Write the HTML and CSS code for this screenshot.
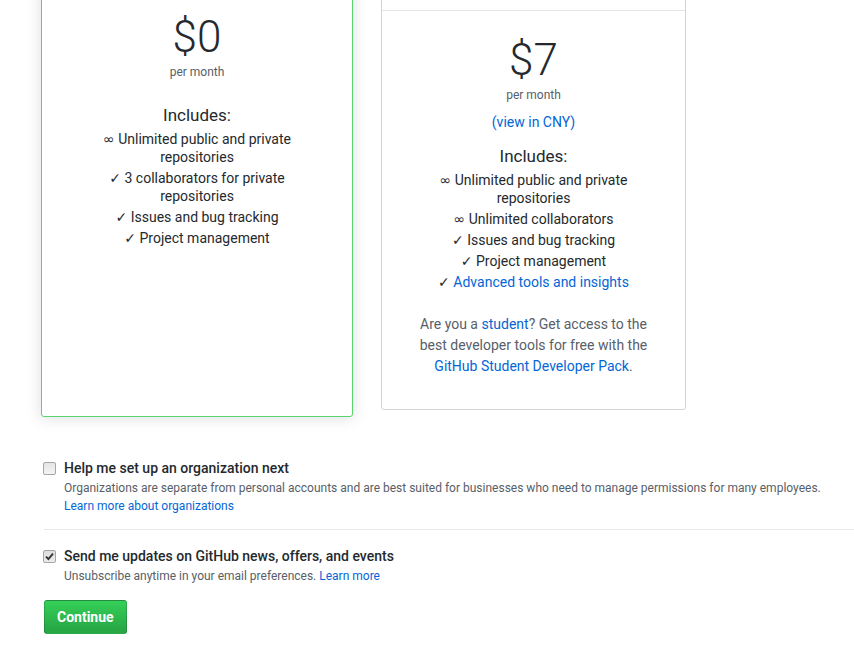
FILE: index.html
```html
<!DOCTYPE html>
<html lang="en">
<head>
<meta charset="utf-8">
<title>Choose your plan</title>
<link rel="stylesheet" href="styles.css">
</head>
<body>
<div class="page">
  <div class="plans">
    <div class="plan plan-selected">
      <div class="plan-body plan-body-free">
        <div class="price">$0</div>
        <div class="per-month">per month</div>
        <div class="includes includes-free">Includes:</div>
        <ul class="features">
          <li><span class="sym">∞</span> Unlimited public and private repositories</li>
          <li><span class="sym">✓</span> 3 collaborators for private repositories</li>
          <li><span class="sym">✓</span> Issues and bug tracking</li>
          <li><span class="sym">✓</span> Project management</li>
        </ul>
      </div>
    </div>
    <div class="plan">
      <div class="plan-header"></div>
      <div class="plan-body plan-body-dev">
        <div class="price">$7</div>
        <div class="per-month">per month</div>
        <a class="currency" href="#">(view in CNY)</a>
        <div class="includes">Includes:</div>
        <ul class="features">
          <li><span class="sym">∞</span> Unlimited public and private repositories</li>
          <li><span class="sym">∞</span> Unlimited collaborators</li>
          <li><span class="sym">✓</span> Issues and bug tracking</li>
          <li><span class="sym">✓</span> Project management</li>
          <li><span class="sym">✓</span> <a href="#">Advanced tools and insights</a></li>
        </ul>
        <p class="student">Are you a <a href="#">student</a>? Get access to the best developer tools for free with the <a href="#">GitHub Student Developer Pack</a>.</p>
      </div>
    </div>
  </div>

  <form class="options">
    <label class="option">
      <input type="checkbox" class="cb-input">
      <span class="cb-box"></span>
      <span class="option-text">
        <span class="option-title">Help me set up an organization next</span>
        <span class="note">Organizations are separate from personal accounts and are best suited for businesses who need to manage permissions for many employees.</span>
        <a class="note-link" href="#">Learn more about organizations</a>
      </span>
    </label>
    <hr class="divider">
    <label class="option option-second">
      <input type="checkbox" class="cb-input" checked>
      <span class="cb-box cb-checked"><svg width="9" height="9" viewBox="0 0 9 9"><path d="M1 4.6 L3.4 7 L8 1.6" fill="none" stroke="#333" stroke-width="1.9"/></svg></span>
      <span class="option-text">
        <span class="option-title">Send me updates on GitHub news, offers, and events</span>
        <span class="note">Unsubscribe anytime in your email preferences. <a href="#">Learn more</a></span>
      </span>
    </label>
    <button type="button" class="btn-primary">Continue</button>
  </form>
</div>
</body>
</html>
```
FILE: styles.css
```css
* { box-sizing: border-box; }
body {
  margin: 0;
  background: #fff;
  color: #24292e;
  font-family: Roboto, "Noto Sans", sans-serif;
  font-size: 14px;
  overflow: hidden;
}
a { color: #0366d6; text-decoration: none; }
.page {
  padding-left: 40px;
  margin-top: -60px;
}
.plans {
  display: flex;
  align-items: stretch;
  gap: 28px;
}
.plan {
  width: 305px;
  border: 1px solid #d1d5da;
  border-radius: 3px;
  background: #fff;
  text-align: center;
}
.plan-selected {
  width: 312px;
  margin-left: 1px;
  margin-bottom: -7px;
  border-color: #5ad46c;
  box-shadow: 0 1px 15px rgba(27, 31, 35, 0.15);
}
.plan-header {
  height: 70px;
  border-bottom: 1px solid #e1e4e8;
}
.plan-body { display: flex; flex-direction: column; align-items: center; }
.plan-body-free { padding-top: 72px; }
.plan-body-dev { padding: 25px 30px 32px; }
.price {
  font-size: 44px;
  line-height: 48px;
  font-weight: 300;
}
.per-month {
  margin-top: 2px;
  font-size: 12px;
  line-height: 18px;
  color: #586069;
}
.currency {
  margin-top: 8px;
  font-size: 14px;
  line-height: 20px;
}
.includes {
  margin-top: 12px;
  font-size: 17px;
  line-height: 24px;
}
.includes-free { margin-top: 22px; }
.features {
  list-style: none;
  margin: 3px 0 0;
  padding: 0;
  width: 210px;
  display: flex;
  flex-direction: column;
  gap: 3px;
}
.features li { line-height: 18px; }
.sym {
  font-family: "DejaVu Sans", sans-serif;
  font-size: 14px;
  line-height: 0;
}
.student {
  margin: 23px 0 0;
  line-height: 21px;
  color: #586069;
  width: 236px;
}
.options {
  margin-top: 48px;
  display: flex;
  flex-direction: column;
  align-items: flex-start;
}
.option {
  display: flex;
  align-items: flex-start;
  gap: 8px;
  margin-left: 3px;
  cursor: pointer;
}
.cb-input { display: none; }
.cb-box {
  flex: none;
  width: 13px;
  height: 13px;
  margin-top: 4px;
  border: 1px solid #a6a6a6;
  border-radius: 2px;
  background: linear-gradient(#e4e4e4, #f4f4f4);
  display: flex;
  align-items: center;
  justify-content: center;
}
.cb-checked { background: linear-gradient(#dcdcdc, #ececec); }
.option-text { display: flex; flex-direction: column; }
.option-title {
  font-weight: 500;
  line-height: 20px;
}
.note {
  margin-top: 1px;
  font-size: 12px;
  line-height: 18px;
  color: #586069;
}
.note-link {
  font-size: 12px;
  line-height: 18px;
}
.divider {
  align-self: stretch;
  margin: 14px 0 0 4px;
  border: 0;
  border-top: 1px solid #e6e8eb;
  height: 0;
}
.option-second { margin-top: 16px; }
.btn-primary {
  margin: 15px 0 0 4px;
  height: 34px;
  padding: 0 12px;
  border: 1px solid rgba(27, 31, 35, 0.2);
  border-radius: 3px;
  background: linear-gradient(-180deg, #34d058 0%, #28a745 90%);
  color: #fff;
  font-family: inherit;
  font-size: 14px;
  font-weight: 700;
  line-height: 20px;
  cursor: pointer;
}
```
